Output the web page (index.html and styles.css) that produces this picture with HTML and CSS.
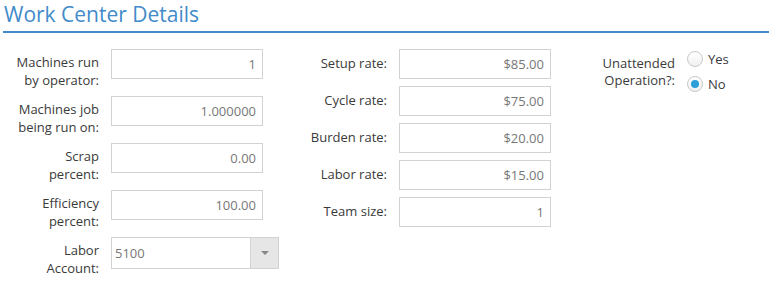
FILE: index.html
```html
<!DOCTYPE html>
<html lang="en">
<head>
  <meta charset="UTF-8">
  <title>Work Center Details</title>
  <link rel="stylesheet" href="styles.css">
</head>
<body>
  <div class="panel">
    <h2 class="panel-title">Work Center Details</h2>

    <div class="form">
      <!-- Left column -->
      <div class="column tall">
        <label class="label">Machines run by operator:</label>
        <input class="field" type="text" value="1">

        <label class="label">Machines job being run on:</label>
        <input class="field" type="text" value="1.000000">

        <label class="label">Scrap<br>percent:</label>
        <input class="field" type="text" value="0.00">

        <label class="label">Efficiency percent:</label>
        <input class="field" type="text" value="100.00">

        <label class="label">Labor<br>Account:</label>
        <div class="select">
          <span class="select-value">5100</span>
          <span class="select-button"><span class="caret"></span></span>
        </div>
      </div>

      <!-- Middle column -->
      <div class="column">
        <label class="label">Setup rate:</label>
        <input class="field" type="text" value="$85.00">

        <label class="label">Cycle rate:</label>
        <input class="field" type="text" value="$75.00">

        <label class="label">Burden rate:</label>
        <input class="field" type="text" value="$20.00">

        <label class="label">Labor rate:</label>
        <input class="field" type="text" value="$15.00">

        <label class="label">Team size:</label>
        <input class="field" type="text" value="1">
      </div>

      <!-- Right column -->
      <div class="column options">
        <label class="label narrow">Unattended Operation?:</label>
        <div class="radios">
          <label class="radio"><span class="radio-dot"></span>Yes</label>
          <label class="radio"><span class="radio-dot checked"></span>No</label>
        </div>
      </div>
    </div>
  </div>
</body>
</html>
```

FILE: styles.css
```css
body {
  margin: 0;
  padding: 0;
  font-family: "Open Sans", Arial, sans-serif;
  font-size: 13px;
  color: #333;
  background-color: #fff;
}

.panel {
  padding-left: 3px;
}

.panel-title {
  margin: 0;
  padding-left: 1px;
  height: 31px;
  font-size: 21px;
  font-weight: normal;
  line-height: 28px;
  color: #428bca;
  border-bottom: 2px solid #428bca;
}

.form {
  display: flex;
  gap: 25px;
  margin: 16px 0 0 -3px;
}

.column {
  display: grid;
  grid-template-columns: 99px 152px;
  column-gap: 12px;
  row-gap: 7px;
  align-content: start;
  align-items: start;
}

.column.options {
  grid-template-columns: 99px auto;
}

.label {
  text-align: right;
  line-height: 17px;
  padding-top: 6px;
  color: #3a3a3a;
}

.column.tall .label {
  line-height: 18px;
  padding: 4px 0 0 6px;
}

.narrow {
  padding-left: 26px;
}

.field {
  box-sizing: border-box;
  width: 152px;
  height: 30px;
  margin: 0;
  padding: 0 6px;
  border: 1px solid #d2d2d2;
  font-family: inherit;
  font-size: 13px;
  color: #777;
  text-align: right;
  outline: none;
}

.select {
  display: flex;
  box-sizing: border-box;
  width: 168px;
  height: 32px;
  border: 1px solid #d2d2d2;
}

.select-value {
  flex: 1;
  padding-left: 3px;
  line-height: 30px;
  color: #777;
}

.select-button {
  display: flex;
  align-items: center;
  justify-content: center;
  width: 27px;
  background-color: #e6e6e6;
  border-left: 1px solid #d2d2d2;
}

.caret {
  width: 0;
  height: 0;
  border-left: 4px solid transparent;
  border-right: 4px solid transparent;
  border-top: 4px solid #888;
}

.radios {
  display: flex;
  flex-direction: column;
  gap: 9px;
  padding-top: 2px;
}

.radio {
  display: flex;
  align-items: center;
  gap: 5px;
  height: 16px;
  color: #3a3a3a;
}

.radio-dot {
  box-sizing: border-box;
  width: 16px;
  height: 16px;
  border-radius: 50%;
  border: 1px solid #c8c8c8;
  background: linear-gradient(to bottom, #fff, #f0f0f0);
  position: relative;
}

.radio-dot.checked::after {
  content: '';
  position: absolute;
  top: 3px;
  left: 3px;
  width: 8px;
  height: 8px;
  border-radius: 50%;
  background-color: #2a9fd8;
}
```
